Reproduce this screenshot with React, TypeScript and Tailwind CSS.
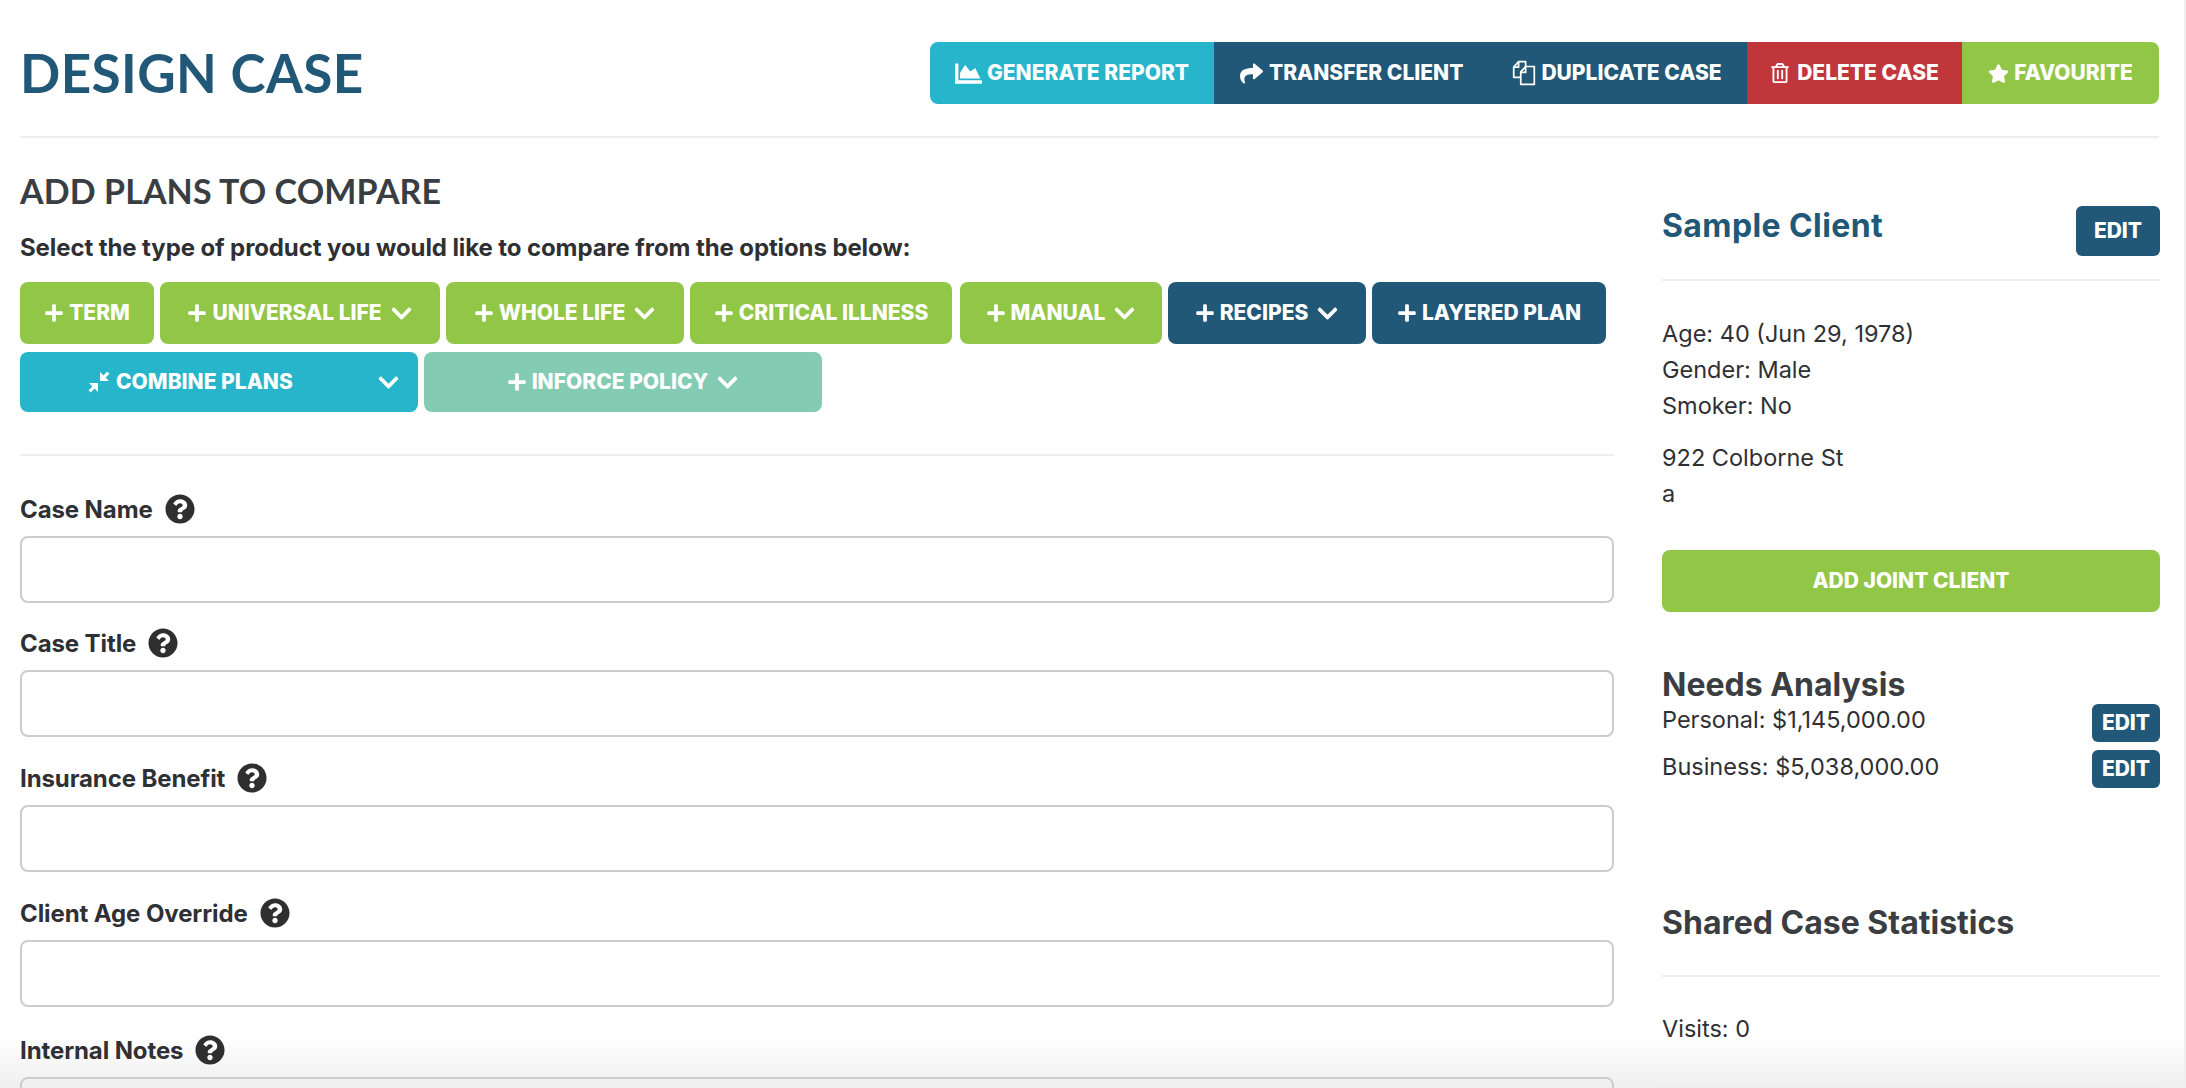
import { FaChartArea, FaChevronDown, FaPlus, FaQuestionCircle, FaRegTrashAlt, FaShare, FaStar } from "react-icons/fa";

const CopyIcon = () => (
  <svg width="24" height="26" viewBox="0 0 22 24" fill="none" stroke="currentColor" strokeWidth="1.6" strokeLinejoin="round">
    <path d="M8 16H1.500V6.500L6 1.500h6.500V6" />
    <path d="M6 1.500V6.500H1.500" />
    <path d="M8 22.500V11l4.500-5H20.500v16.500z" />
    <path d="M12.500 6v5.500H8" />
  </svg>
);

const CompressIcon = () => (
  <svg width="22" height="22" viewBox="0 0 20 20" fill="currentColor">
    <path d="M11 1v8h8l-3-3 3.500-3.500L17.500.5 14 4z" />
    <path d="M9 19v-8H1l3 3-3.500 3.500 2 2L6 16z" />
  </svg>
);

const PlanButton = ({ label, color, width, caret }: { label: string; color: string; width: string; caret?: boolean }) => (
  <button className={`${color} ${width} h-[62px] rounded-lg flex items-center justify-center gap-[5px] text-white text-[21px] font-extrabold uppercase`}>
    <FaPlus className="text-[20px]" />
    <span>{label}</span>
    {caret && <FaChevronDown className="text-[23px] ml-[3px]" />}
  </button>
);

const Field = ({ label, mt }: { label: string; mt: string }) => (
  <div className={mt}>
    <label className="flex items-center gap-[12px] h-[30px] text-[24px] tracking-[-0.1px] font-bold text-[#2f3033]">
      <span className="mt-[2px]">{label}</span>
      <FaQuestionCircle className="text-[30px] text-[#2f2f2f]" />
    </label>
    <input className="block mt-[12px] w-full h-[67px] rounded-lg border-2 border-[#cccccc] bg-transparent" />
  </div>
);

const EditButton = ({ small }: { small?: boolean }) => (
  <button className={`${small ? "w-[68px] h-[38px]" : "w-[84px] h-[50px]"} bg-[#215877] rounded-md text-white text-[21px] font-extrabold`}>EDIT</button>
);

export default function App() {
  return (
    <div className="h-[1088px] overflow-hidden bg-[linear-gradient(to_bottom,#ffffff_1035px,#efefef_1088px)] text-[#2f3033] font-['Inter','Open_Sans',sans-serif] border-r-2 border-[#eeeeee]">
      {/* header */}
      <div className="ml-[20px] w-[2139px] h-[138px] pt-[42px] border-b-2 border-[#eeeeee] flex justify-between">
        <h1 className="font-['Lato'] text-[53px] leading-[62px] tracking-[0.4px] font-bold text-[#215877]">DESIGN CASE</h1>
        <div className="flex h-[62px] text-white rounded-lg overflow-hidden">
          <button className="w-[284px] bg-[#26b5ca] flex items-center justify-center gap-[5px] text-[21px] font-extrabold uppercase"><FaChartArea className="text-[27px]" />Generate Report</button>
          <button className="w-[533px] bg-[#215877] flex items-center pl-[26px] gap-[49px] text-[21px] font-extrabold uppercase">
            <span className="flex items-center gap-[6px]"><FaShare className="text-[23px]" />Transfer Client</span>
            <span className="flex items-center gap-[5px]"><CopyIcon />Duplicate Case</span>
          </button>
          <button className="w-[215px] bg-[#c1363a] flex items-center justify-center gap-[7px] text-[21px] font-extrabold uppercase"><FaRegTrashAlt className="text-[20px]" />Delete Case</button>
          <button className="w-[197px] bg-[#92c647] flex items-center justify-center gap-[5px] text-[21px] font-extrabold uppercase"><FaStar className="text-[21px]" />Favourite</button>
        </div>
      </div>

      <div className="ml-[20px] w-[2140px] flex justify-between">
        {/* left column */}
        <div className="w-[1594px]">
          <h2 className="font-['Lato'] mt-[33px] h-[40px] text-[34px] leading-[40px] tracking-[0.1px] font-bold text-[#3a3d41]">ADD PLANS TO COMPARE</h2>
          <p className="mt-[23px] h-[28px] text-[24px] leading-[28px] tracking-[-0.1px] font-bold">Select the type of product you would like to compare from the options below:</p>
          <div className="mt-[20px] flex flex-wrap gap-x-[6px] gap-y-[8px]">
            <PlanButton label="Term" color="bg-[#92c647]" width="w-[134px]" />
            <PlanButton label="Universal Life" color="bg-[#92c647]" width="w-[280px]" caret />
            <PlanButton label="Whole Life" color="bg-[#92c647]" width="w-[238px]" caret />
            <PlanButton label="Critical Illness" color="bg-[#92c647]" width="w-[262px]" />
            <PlanButton label="Manual" color="bg-[#92c647] ml-[2px]" width="w-[202px]" caret />
            <PlanButton label="Recipes" color="bg-[#215877]" width="w-[198px]" caret />
            <PlanButton label="Layered Plan" color="bg-[#215877]" width="w-[234px]" />
            <button className="relative w-[398px] h-[60px] rounded-lg bg-[#26b5ca] flex items-center pl-[68px] gap-[6px] text-white text-[21px] font-extrabold uppercase">
              <CompressIcon />
              Combine Plans
              <FaChevronDown className="absolute right-[18px] text-[23px]" />
            </button>
            <button className="w-[398px] h-[60px] rounded-lg bg-[#83cbb3] flex items-center justify-center gap-[5px] text-white text-[21px] font-extrabold uppercase">
              <FaPlus className="text-[20px]" />
              Inforce Policy
              <FaChevronDown className="text-[23px] ml-[3px]" />
            </button>
          </div>
          <div className="mt-[42px] border-t-2 border-[#eeeeee]" />
          <Field label="Case Name" mt="mt-[38px]" />
          <Field label="Case Title" mt="mt-[25px]" />
          <Field label="Insurance Benefit" mt="mt-[26px]" />
          <Field label="Client Age Override" mt="mt-[26px]" />
          <Field label="Internal Notes" mt="mt-[28px]" />
        </div>

        {/* right column */}
        <div className="w-[498px] text-[23.5px] leading-[36px]">
          <div className="mt-[68px] h-[75px] flex justify-between border-b-2 border-[#eeeeee]">
            <h3 className="text-[32px] leading-[40px] tracking-[0.4px] font-bold text-[#215877]">Sample Client</h3>
            <EditButton />
          </div>
          <div className="mt-[35px]">
            <p>Age: 40 (Jun 29, 1978)</p>
            <p>Gender: Male</p>
            <p>Smoker: No</p>
          </div>
          <div className="mt-[16px]">
            <p>922 Colborne St</p>
            <p>a</p>
          </div>
          <button className="mt-[38px] w-full h-[62px] rounded-lg bg-[#92c647] text-white text-[21px] font-extrabold">ADD JOINT CLIENT</button>
          <h3 className="mt-[53px] text-[32px] leading-[40px] font-bold text-[#3a3d41]">Needs Analysis</h3>
          <div className="-mt-[1px] flex justify-between">
            <p className="-mt-[2px]">Personal: $1,145,000.00</p>
            <EditButton small />
          </div>
          <div className="mt-[8px] flex justify-between">
            <p className="-mt-[1px]">Business: $5,038,000.00</p>
            <EditButton small />
          </div>
          <h3 className="mt-[115px] text-[32px] leading-[40px] font-bold text-[#3a3d41]">Shared Case Statistics</h3>
          <div className="mt-[32px] border-t-2 border-[#eeeeee]" />
          <p className="mt-[34px]">Visits: 0</p>
          <div className="mt-[37px] border-t-2 border-[#eeeeee]" />
        </div>
      </div>
    </div>
  );
}
